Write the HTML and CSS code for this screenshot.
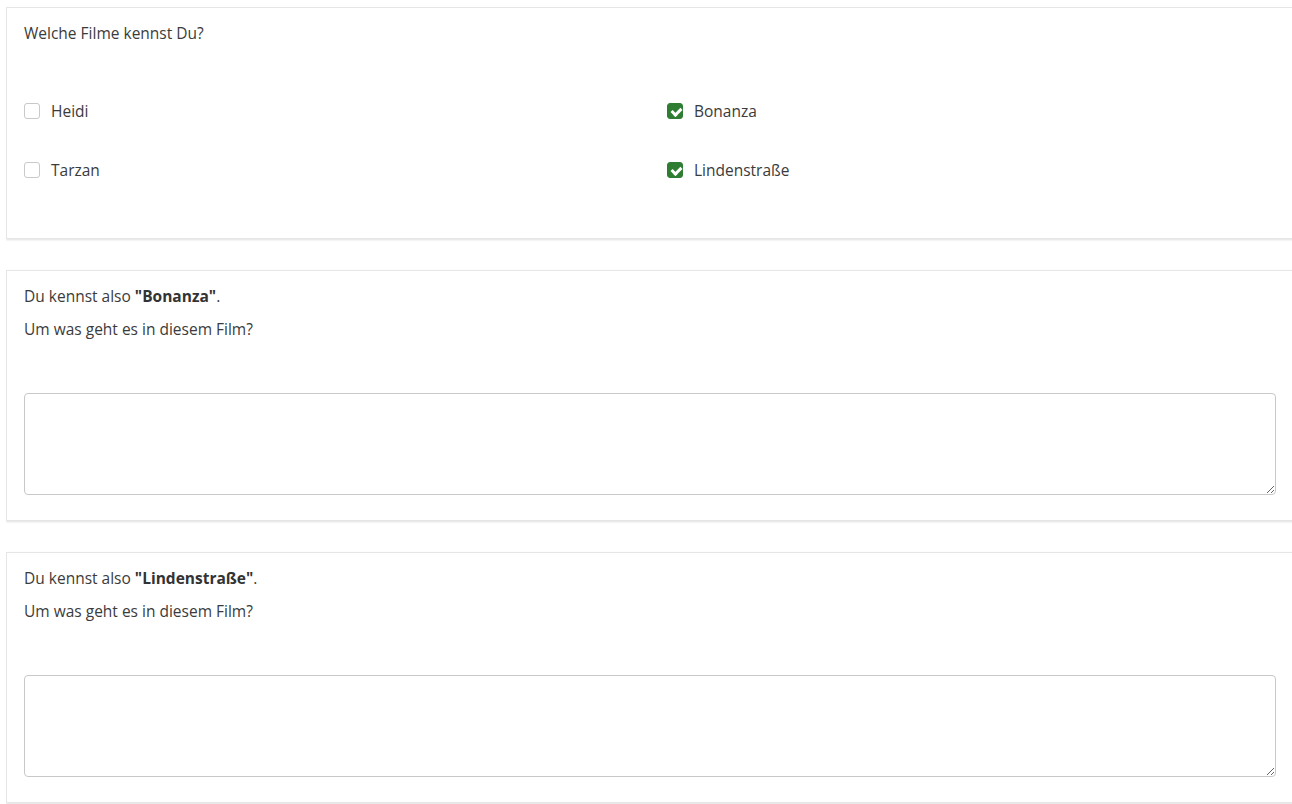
FILE: index.html
```html
<!DOCTYPE html>
<html>
<head>
    <meta charset="UTF-8">
    <title>Filmumfrage</title>
    <link rel="stylesheet" href="styles.css">
</head>
<body>
    <!-- Frage 1: Mehrfachauswahl -->
    <div class="card">
        <p class="question">Welche Filme kennst Du?</p>
        <div class="options">
            <label class="option"><input type="checkbox"><span class="box"></span>Heidi</label>
            <label class="option"><input type="checkbox" checked><span class="box"></span>Bonanza</label>
            <label class="option"><input type="checkbox"><span class="box"></span>Tarzan</label>
            <label class="option"><input type="checkbox" checked><span class="box"></span>Lindenstraße</label>
        </div>
    </div>

    <!-- Folgefragen zu den ausgewählten Filmen -->
    <div class="card">
        <p class="intro">Du kennst also <strong>"Bonanza"</strong>.</p>
        <p class="question">Um was geht es in diesem Film?</p>
        <textarea class="answer"></textarea>
    </div>

    <div class="card">
        <p class="intro">Du kennst also <strong>"Lindenstraße"</strong>.</p>
        <p class="question">Um was geht es in diesem Film?</p>
        <textarea class="answer"></textarea>
    </div>
</body>
</html>
```

FILE: styles.css
```css
/* Seite */
html, body {
    overflow-x: hidden;
}

body {
    margin: 7px 0 0 6px;
    font-family: "Open Sans", "Noto Sans", sans-serif;
    font-size: 15.5px;
    line-height: 20px;
    color: #3b3b3b;
    background: #fff;
}

/* Karten */
.card {
    width: 1320px;
    border: 1px solid #e6e6e6;
    box-shadow: 0 1px 2px rgba(0, 0, 0, 0.12);
    padding: 15px 17px 25px;
    margin-bottom: 31px;
    background: #fff;
}

.card p {
    margin: 0;
}

.intro {
    margin-bottom: 13px !important;
}

strong {
    font-weight: 700;
    color: #333;
}

/* Checkbox-Raster */
.options {
    display: grid;
    grid-template-columns: 643px 1fr;
    row-gap: 39px;
    margin-top: 58px;
    margin-bottom: 33px;
}

.option {
    display: flex;
    align-items: center;
    gap: 11px;
    height: 20px;
    cursor: pointer;
}

.option input {
    display: none;
}

.box {
    width: 16px;
    height: 16px;
    box-sizing: border-box;
    border: 1px solid #c9c9c9;
    border-radius: 3px;
    background: #fff;
    position: relative;
}

.option input:checked + .box {
    background: #2e7d32;
    border-color: #2e7d32;
}

/* Haken */
.option input:checked + .box::after {
    content: "";
    position: absolute;
    left: 4.5px;
    top: 1.5px;
    width: 4px;
    height: 7px;
    border: solid #fff;
    border-width: 0 3px 3px 0;
    transform: rotate(45deg);
}

/* Antwortfeld */
.answer {
    display: block;
    box-sizing: border-box;
    width: 1252px;
    height: 102px;
    margin-top: 54px;
    border: 1px solid #c8c8c8;
    border-radius: 4px;
    font-family: inherit;
    font-size: 14px;
    padding: 6px 10px;
}
```
